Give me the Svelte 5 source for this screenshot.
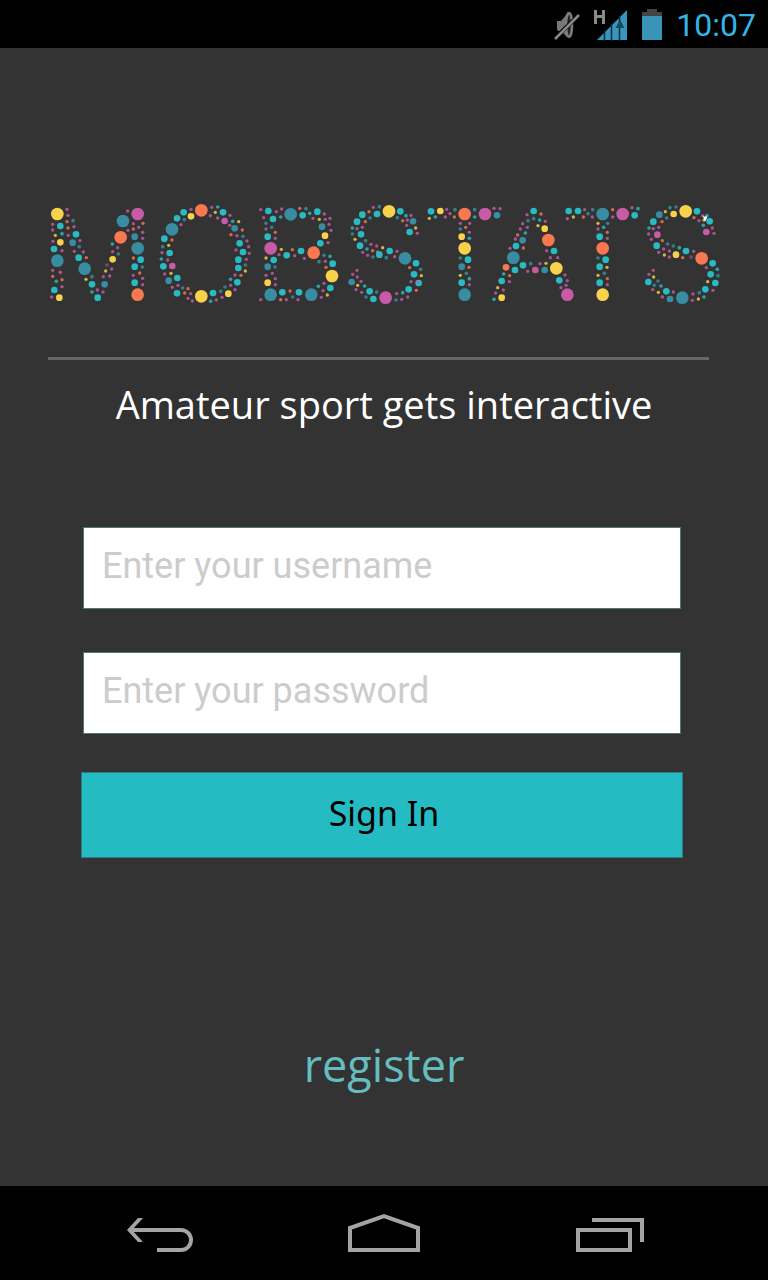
<script>
  // Each dot is colour, x, y and an optional size: L large, M medium, S small.
  const colours = { y: '#f8d24c', t: '#28bbc3', b: '#388da2', p: '#c75ba6', o: '#fa784f', v: '#84507f' };
  const radii = { L: 19, M: 10, S: 5.5 };
  const letters = [
    { left: 0, dots: 'y52,57L p81,43 p84,61 o81,80 b99,77S p38,88 t61,93M o84,99 p102,95 p38,105 t66,116S y46,121 p85,121 t108,118M p120,137 p39,139 y61,142M b98,143M b118,155S t42,162M p66,167 p103,169 p130,171 b52,197L t116,188M o139,188 p38,226 p61,232S o38,244 t49,259S o66,254 p66,275 t43,285M p35,306 y58,308M b134,221L b156,245S y138,253 t156,268M t156,291S t173,308M p172,285 p189,291 b194,268M p190,245 y197,228 p209,243 p215,222 v201,210S y218,193M p218,170 b235,177S p233,158 t217,147S o242,127L b249,78L p263,48 p293,57L o309,85 p280,86 p296,97 o280,102 p264,106 p308,112 b284,125M p308,130 b293,160L o280,189 t302,194M t284,215M b307,216S o299,234 p280,241 p308,250 t284,263M p308,269 o293,299L' },
    { left: 330, dots: 'o154,46L p123,43 t101,52M p185,37 t203,36S y196,52 p181,62 t219,52M p240,61 y123,64M b103,74S t81,70M p93,89 b66,103L p203,69 p224,78M t248,79S y266,80 p239,91 b254,100M o277,105 o243,119 p261,122 b279,124S p291,138 t43,131M o66,135 y56,151 b38,155S p36,173 t59,174M t34,192S p53,195 t40,214M p67,213M t269,145M p296,155 p258,165 t279,171M p298,175 t265,194M p289,193 b286,210S t265,219M y286,228 p255,240 o273,241 p44,237 y63,235 t82,249M b56,257M t242,253S t262,262M p242,271 p255,284 b225,276S p216,307 y235,296M b212,289S p199,315 t189,294M t182,319S y154,304L p67,277 p84,271 b98,279S o114,281 t81,295M o104,294 p122,296 p114,310 p127,318' },
    { left: 630, dots: 'b122,58L p32,44 t55,48M p79,50 p95,42 p41,68 t69,72M t92,66S b48,85S b65,97S p48,102 o76,112 t53,125M p76,130 p62,160L o149,40 b168,41S t158,61M t179,55S t202,50M p223,57 p189,70 y208,73 p226,73 p240,70 p237,88 b216,95M p243,106 y225,122M p234,143 t211,145M y94,163 o127,164 t153,168M p87,179 t110,181M p134,182 p163,190 o191,173L y48,189 t71,195M b53,215M b75,216S p67,235 p48,241 p76,251 y53,263M p76,269 b62,299L p32,314 b222,181S t240,184S b207,200S p226,199 t248,206M o228,217 y246,243L p222,265 t205,274S t241,279M p219,287 y232,300 p214,307 b184,299L t97,292M o120,288 t147,292M b128,306S o92,314 p109,314 p144,314' },
    { left: 900, dots: 'y147,49L p100,37 b118,35S o87,50 t67,59M t111,57M b90,69S t51,80M o76,80 t37,99S p51,101 p67,97 b37,117S t63,118M y45,133 b77,137S t60,152M p93,148 p110,153 t81,162S y128,158 o98,167 p113,171S t149,168M p171,169 p68,172 p83,181 b99,186S t118,179M b139,188S p164,185 t181,49M t198,62S p213,61 b172,68S o188,77 p202,75 b219,79M p200,91 y227,99 t209,111M p232,115 b195,190L t228,205M o209,218 b242,223S t222,238M y244,242 t236,264M p213,260 p232,259 t206,283M o229,286 t188,293S p170,296 p203,306 p185,313 b168,315S p137,308L p51,226 p38,238 p52,246 b35,261M p63,259 y53,271 t74,273S p48,284 p65,292 t89,289M b110,291S b78,306S t100,312M' },
    { left: 1140, dots: 't33,49M y61,48M p80,43 b105,44S p90,56 t46,66S y28,70 p76,66 o103,66 o134,57L b164,44S t164,66S p195,57L p222,40 p240,41 b231,61M p121,85 p149,85 b121,102S o137,97 p148,112 y125,125M t148,130S y134,160L b121,189S t144,194M b125,215M o147,217 y121,241 b139,235S t148,251S t125,263M p148,269 b134,299L' },
    { left: 1335, dots: 't146,48M p126,59 o168,57 b146,71S b129,77S t164,75S p181,79 p113,86 p127,97 y159,92 y179,101M p106,102 o98,120 t121,114S p91,132 b113,136M t93,153M p75,160 o115,159 b85,188L o190,135L p185,167 t207,168M p196,188 p218,188 y214,220L o63,217M t90,225M t114,211M b137,206S p165,206 y183,205 p151,225M p128,229 b179,225M t56,237S o74,242 t50,258M p73,260 y38,278 p55,285 p32,294 y50,308M t27,313S p240,240 t223,256M p247,257 p243,271 p228,278 p247,299L' },
    { left: 1560, dots: 't26,48M t54,48M p74,44 b98,44S b84,56S p22,71 y40,66 o70,66 p97,66 b128,57L o158,44 p158,66 p188,57L p216,38 t234,41S t224,61M y114,85 b143,85S p114,102 t131,97S o142,112 t119,125M p142,130 o128,160L b114,189S t137,194M t119,215M y141,217 y114,241 b133,235S o142,251 t119,263M p142,269 y128,299L' },
    { left: 1785, dots: 'y152,49L b105,38S b123,36S y91,50 b73,59M y116,57M b95,69S t55,80M o81,80 t42,99S p55,101 p71,97 p41,117 p67,119M p49,133 o82,137 t65,152M b98,147S b115,153S p86,162 t133,158S p103,168 t153,168M p176,169 p71,172 y88,180 p103,186 y123,179M o143,188 v168,186S t186,49M p203,62 t216,62S o177,68 p192,77 y207,75 t224,79M t205,91S p232,99 p214,111M p237,115 o200,190L t233,205M p214,218 t247,223S t227,238M b249,242S t241,264M y218,260 t211,283M p234,286 b193,293S p174,297 t207,306S y190,312 p172,316 b142,308L p55,226 p42,238 y56,246 t40,261M b69,258S b58,271S t78,273S p53,284 y70,292 t94,289M p115,291 p82,306 b105,312M' }
  ].map(({ left, dots }) => ({
    left,
    dots: dots.split(' ').map((d) => {
      const [, c, x, y, s] = d.match(/^(\w)(\d+),(\d+)(\w?)$/);
      return { x: +x, y: +y, r: radii[s] ?? 5, fill: colours[c], opacity: radii[s] > 6 ? 1 : 0.82 };
    })
  }));

  let username = $state('');
  let password = $state('');
</script>

<div class="screen">
  <header class="status">
    <svg width="28" height="32" viewBox="0 0 28 32" role="img" aria-label="Muted">
      <path d="M4 12h4l6-7v23l-6-6H5l-1-2z" fill="#777" />
      <ellipse cx="16" cy="16" rx="3" ry="12" fill="#222" stroke="#7c7c7c" stroke-width="2.5" />
      <path d="M1 30L26 6" stroke="#000" stroke-width="4" />
      <path d="M2 30L26 6" stroke="#8a8a8a" stroke-width="2.5" />
    </svg>
    <svg width="34" height="32" viewBox="0 0 34 32" role="img" aria-label="Signal">
      <path d="M3 31L33 1V31z" fill="#3795be" />
      <path d="M10.5 22v10M17.5 15v17M25.5 7v25" stroke="#0c2a38" stroke-width="1.5" />
      <path d="M26 11l4.5 8h-9z" fill="#17485c" />
      <path d="M0 1h3v5h5V1h3v14H8V9H3v6H0z" fill="#898989" />
    </svg>
    <svg width="22" height="32" viewBox="0 0 22 32" role="img" aria-label="Battery full">
      <path d="M6 0h10v3h5v5H1V3h5z" fill="#444" />
      <path d="M1 7h20v24H1z" fill="#3a94b8" />
    </svg>
    <time>10:07</time>
  </header>

  <main>
    <svg class="logo" viewBox="0 0 2070 345" role="img" aria-label="Mobstats">
      {#each letters as letter}
        <g transform="translate({letter.left} 0)">
          {#each letter.dots as dot}
            <circle cx={dot.x} cy={dot.y} r={dot.r} fill={dot.fill} opacity={dot.opacity} />
          {/each}
        </g>
      {/each}
      <path d="M1989 62l6 3 5-3 1 8-4 5 3 1-6 2-2-5z" fill="#fff" />
    </svg>
    <hr />
    <p>Amateur sport gets interactive</p>

    <form onsubmit={(e) => e.preventDefault()}>
      <input type="text" aria-label="Username" placeholder="Enter your username" bind:value={username} />
      <input type="password" aria-label="Password" placeholder="Enter your password" bind:value={password} />
      <button type="submit">Sign In</button>
    </form>

    <a href="#register">register</a>
  </main>

  <nav>
    <button type="button" aria-label="Back">
      <svg width="80" height="40" viewBox="-4 0 80 40">
        <path d="M9 17H61a10 10 0 0 1 0 20H37" />
        <path d="M18 5h5L12 17 23 29h-5L7 17z" class="solid" />
      </svg>
    </button>
    <button type="button" aria-label="Home">
      <svg width="80" height="40" viewBox="-4 0 80 40">
        <path d="M2 37V15L36 3l34 12v22z" />
      </svg>
    </button>
    <button type="button" aria-label="Recent apps">
      <svg width="80" height="40" viewBox="-4 0 80 40">
        <path d="M2 17h52v20H2zM16 7h50v22" />
      </svg>
    </button>
  </nav>
</div>

<style>
  :global(body) {
    margin: 0;
    background: #333;
  }
  .screen {
    min-height: 100vh;
    display: flex;
    flex-direction: column;
    background: #333;
    font-family: 'Open Sans', 'Noto Sans', sans-serif;
  }
  .status {
    height: 48px;
    box-sizing: border-box;
    padding: 2px 12px 0;
    display: flex;
    align-items: center;
    justify-content: flex-end;
    gap: 13px;
    background: #000;
  }
  time {
    font: 32px/46px Roboto, sans-serif;
    color: #33b5e5;
  }
  main {
    flex: 1;
    display: flex;
    flex-direction: column;
    padding-top: 147px;
  }
  .logo {
    display: block;
    margin: 0 38px 0 40px;
  }
  hr {
    height: 3px;
    margin: 47px 59px 0 48px;
    border: 0;
    background: #666;
  }
  p {
    margin: 16px 0 0;
    font-size: 38px;
    line-height: 56px;
    text-align: center;
    color: #fff;
  }
  form {
    margin: 95px 85px 0 81px;
    display: flex;
    flex-direction: column;
  }
  input {
    height: 82px;
    box-sizing: border-box;
    margin: 0 2px 43px;
    padding: 0 18px 4px;
    border: 1px solid #527970;
    border-radius: 0;
    background: #fff;
    font: 36px Roboto, sans-serif;
    color: #000;
  }
  input + input {
    margin-bottom: 38px;
  }
  input::placeholder {
    color: #ccc;
    opacity: 1;
  }
  form button {
    height: 86px;
    padding: 0 0 4px 4px;
    border: 1px solid #2b7c80;
    background: #24bbc2;
    font: 34px 'Noto Sans', sans-serif;
    color: #000;
  }
  a {
    align-self: center;
    margin-top: 175px;
    font-size: 45px;
    line-height: 64px;
    color: #66bdbf;
    text-decoration: none;
  }
  nav {
    height: 94px;
    display: flex;
    justify-content: center;
    align-items: center;
    gap: 148px;
    background: #000;
  }
  nav button {
    padding: 0;
    border: 0;
    background: none;
  }
  nav svg {
    display: block;
    fill: none;
    stroke: #a4a4a4;
    stroke-width: 4;
  }
  nav .solid {
    fill: #a4a4a4;
    stroke: none;
  }
</style>
